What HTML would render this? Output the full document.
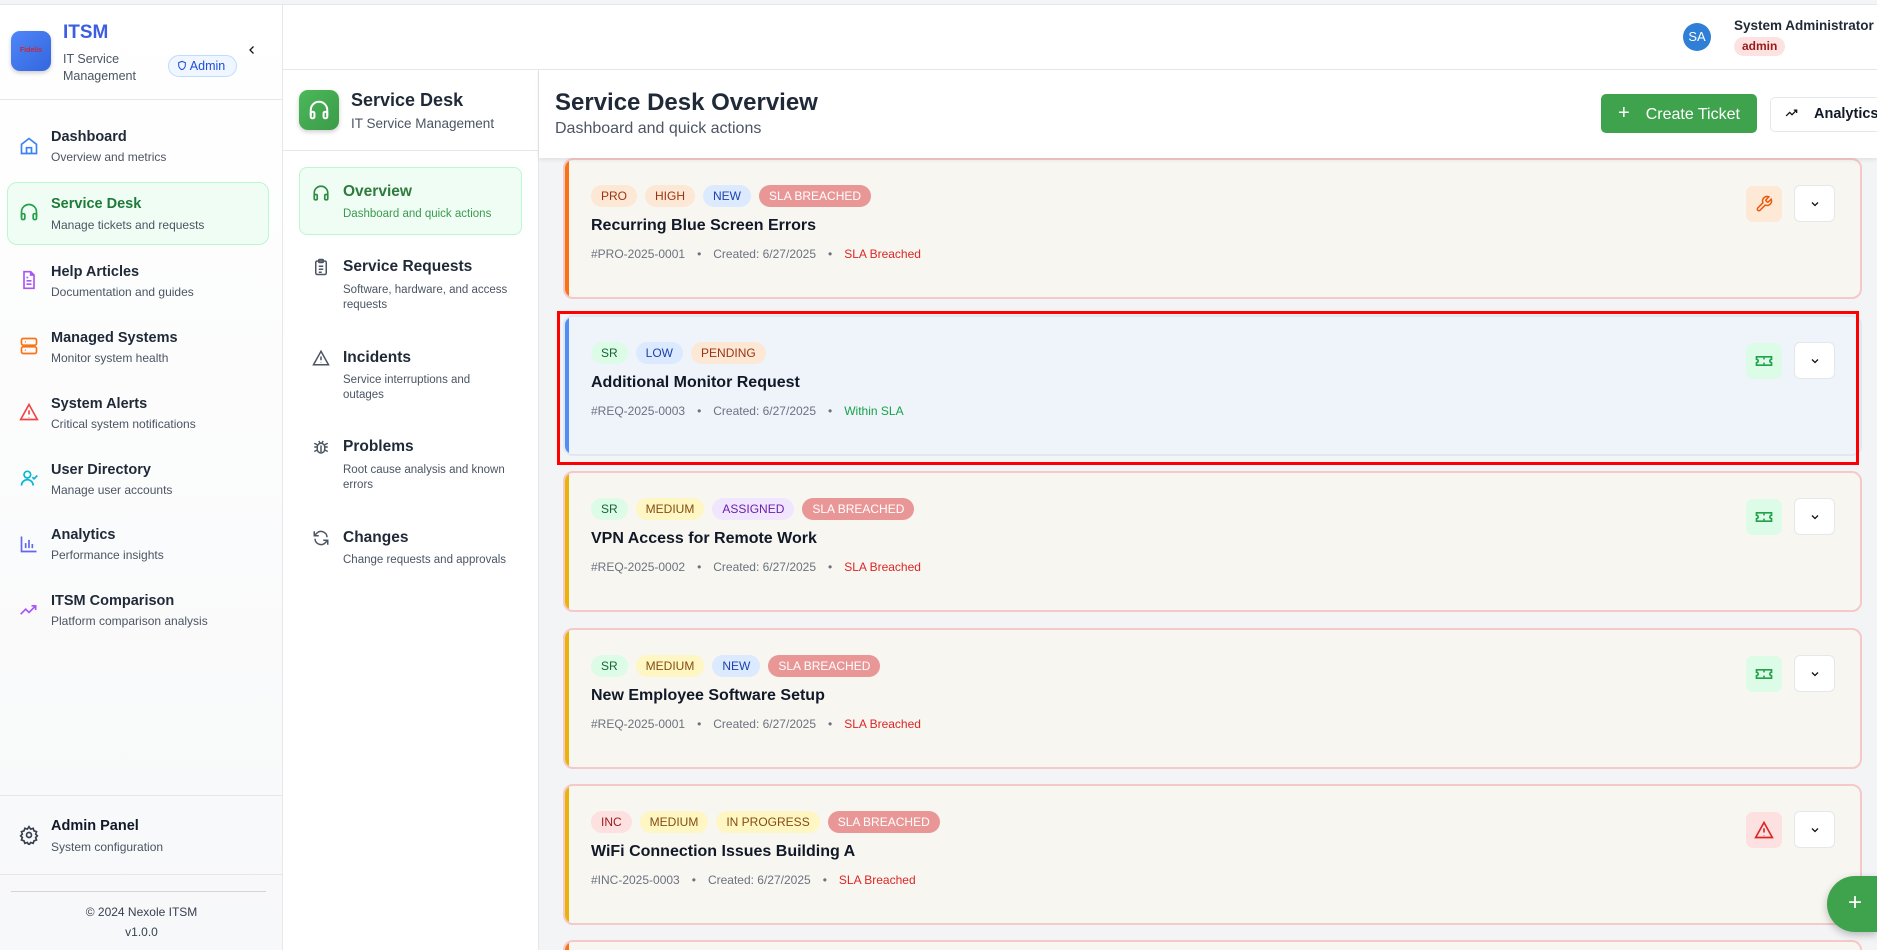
<!DOCTYPE html>
<html><head><meta charset="utf-8"><style>
*{box-sizing:border-box;margin:0;padding:0}
html,body{width:1877px;height:950px;overflow:hidden}
body{font-family:"Liberation Sans",sans-serif;background:#f3f4f6;color:#111827}
#w{position:relative;width:1877px;height:950px;overflow:hidden}
.a{position:absolute}
.side{left:0;top:5px;width:283px;height:945px;background:linear-gradient(#ffffff,#f7f8f9);border-right:1px solid #e5e7eb}
.nav{position:absolute;left:0;width:283px}
.nav .t{position:absolute;left:51px;font-size:14.5px;font-weight:bold;color:#1f2937;white-space:nowrap}
.nav .s{position:absolute;left:51px;font-size:12px;color:#4b5563;white-space:nowrap}
.nav svg{position:absolute;left:19px}
.p2{left:283px;top:70px;width:256px;height:880px;background:#fff;border-right:1px solid #e5e7eb}
.sub .t{position:absolute;left:343px;font-size:15.5px;font-weight:bold;color:#1f2937}
.sub .s{position:absolute;left:343px;font-size:11.5px;color:#4b5563;line-height:15px;white-space:nowrap}
.card{position:absolute;left:563px;width:1299px;height:141px;border:2px solid #f6c8c8;border-radius:10px;background:#f7f6f0;overflow:hidden}
.card:before{content:"";position:absolute;left:0;top:0;bottom:0;width:4px;background:var(--c)}
.badges{position:absolute;left:26px;top:25px;display:flex;gap:8px}
.b{height:22px;line-height:22px;padding:0 10px;border-radius:11px;font-size:12px;font-weight:500}
.ti{position:absolute;left:26px;top:57px;font-size:16px;font-weight:bold;color:#111827}
.me{position:absolute;left:26px;top:87px;font-size:12px;color:#6b7280;white-space:nowrap}
.me i{font-style:normal;margin:0 12px}
.ib{position:absolute;left:1181px;top:26px;width:36px;height:36px;border-radius:7px;display:flex;align-items:center;justify-content:center}
.cb{position:absolute;left:1229px;top:25px;width:41px;height:37px;border-radius:6px;background:#fff;border:1px solid #e5e7eb;display:flex;align-items:center;justify-content:center}
.pro{background:#fde8d5;color:#9a3412}.new{background:#dbeafe;color:#1e40af}.sla{background:#e99696;color:#fff}
.sr{background:#dcfce7;color:#166534}.med{background:#fef6c3;color:#854d0e}.asg{background:#f1e6ff;color:#6b21a8}.inc{background:#fde0e0;color:#991b1b}
</style></head><body><div id="w">
<div class="a" style="left:0;top:4px;width:1877px;height:1px;background:#e5e7eb"></div>
<div class="a" style="left:283px;top:5px;width:1594px;height:65px;background:#fff;border-bottom:1px solid #e5e7eb"></div>
<div class="a" style="left:1683px;top:23px;width:28px;height:28px;border-radius:50%;background:#2f7fd6;color:#fff;font-size:13px;text-align:center;line-height:28px">SA</div>
<div class="a" style="left:1734px;top:18px;font-size:13.5px;font-weight:bold;color:#1f2937">System Administrator</div>
<div class="a" style="left:1734px;top:37px;height:19px;line-height:19px;padding:0 8px;border-radius:10px;background:#fde2e2;color:#991b1b;font-size:12px;font-weight:bold">admin</div>

<div class="a side"></div>
<div class="a" style="left:0;top:99px;width:283px;height:1px;background:#e5e7eb"></div>
<div class="a" style="left:11px;top:31px;width:40px;height:40px;border-radius:9px;background:linear-gradient(135deg,#4f86f7,#3366e0);box-shadow:0 2px 4px rgba(0,0,0,.2);font-size:7px;color:#c02a3a;line-height:40px;text-align:center;font-weight:bold">Fidelis</div>
<div class="a" style="left:63px;top:22px;font-size:19px;font-weight:bold;color:#3d5ee0">ITSM</div>
<div class="a" style="left:63px;top:51px;font-size:12.5px;color:#4b5563;line-height:17px">IT Service<br>Management</div>
<div class="a" style="left:168px;top:55px;width:69px;height:22px;border:1px solid #bfdbfe;background:#eff6ff;border-radius:11px;font-size:12.5px;color:#1d4ed8;line-height:20px;padding-left:8px"><svg width="10" height="11" viewBox="0 0 24 24" fill="none" stroke="#1d4ed8" stroke-width="2.5" style="vertical-align:-1px"><path d="M12 2l8 3v6c0 5-3.5 9-8 11-4.5-2-8-6-8-11V5z"/></svg> Admin</div>
<svg class="a" style="left:246px;top:44px" width="12" height="12" viewBox="0 0 24 24" fill="none" stroke="#111" stroke-width="2.5"><path d="M15 5l-7 7 7 7"/></svg>

<div class="a" style="left:7px;top:182px;width:262px;height:63px;background:#f0fdf4;border:1px solid #bbf7d0;border-radius:10px"></div>
<div class="nav" style="top:0">
 <svg style="top:136px" width="20" height="20" viewBox="0 0 24 24" fill="none" stroke="#3b82f6" stroke-width="2"><path d="M3 10l9-7 9 7v11H3z"/><path d="M9 21v-7h6v7"/></svg>
 <div class="t" style="top:129px">Dashboard</div><div class="s" style="top:150px">Overview and metrics</div>
 <svg style="top:202px" width="20" height="20" viewBox="0 0 24 24" fill="none" stroke="#22a04a" stroke-width="2"><path d="M3 18v-6a9 9 0 0118 0v6"/><rect x="3" y="14" width="4" height="7" rx="1.5"/><rect x="17" y="14" width="4" height="7" rx="1.5"/></svg>
 <div class="t" style="top:196px;color:#1f7a3a">Service Desk</div><div class="s" style="top:218px">Manage tickets and requests</div>
 <svg style="top:270px" width="20" height="20" viewBox="0 0 24 24" fill="none" stroke="#a855f7" stroke-width="2"><path d="M14 2H6v20h12V6z"/><path d="M14 2v4h4M9 13h6M9 17h6M9 9h2"/></svg>
 <div class="t" style="top:264px">Help Articles</div><div class="s" style="top:285px">Documentation and guides</div>
 <svg style="top:336px" width="20" height="20" viewBox="0 0 24 24" fill="none" stroke="#f97316" stroke-width="2"><rect x="3" y="3" width="18" height="8" rx="2"/><rect x="3" y="13" width="18" height="8" rx="2"/><path d="M7 7h1M7 17h1"/></svg>
 <div class="t" style="top:330px">Managed Systems</div><div class="s" style="top:351px">Monitor system health</div>
 <svg style="top:402px" width="20" height="20" viewBox="0 0 24 24" fill="none" stroke="#ef4444" stroke-width="2"><path d="M12 3l10 18H2z"/><path d="M12 10v5M12 18v.5"/></svg>
 <div class="t" style="top:396px">System Alerts</div><div class="s" style="top:417px">Critical system notifications</div>
 <svg style="top:468px" width="20" height="20" viewBox="0 0 24 24" fill="none" stroke="#06b6d4" stroke-width="2"><circle cx="10" cy="8" r="4"/><path d="M3 21a7 7 0 0114 0M16 11l2 2 4-4"/></svg>
 <div class="t" style="top:462px">User Directory</div><div class="s" style="top:483px">Manage user accounts</div>
 <svg style="top:534px" width="20" height="20" viewBox="0 0 24 24" fill="none" stroke="#6366f1" stroke-width="2"><path d="M3 3v18h18M8 17V11M12 17V7M16 17v-5"/></svg>
 <div class="t" style="top:527px">Analytics</div><div class="s" style="top:548px">Performance insights</div>
 <svg style="top:600px" width="20" height="20" viewBox="0 0 24 24" fill="none" stroke="#a855f7" stroke-width="2"><path d="M2 17l6-6 4 4 8-8M15 7h5v5"/></svg>
 <div class="t" style="top:593px">ITSM Comparison</div><div class="s" style="top:614px">Platform comparison analysis</div>
</div>
<div class="a" style="left:0;top:795px;width:283px;height:1px;background:#e5e7eb"></div>
<div class="a" style="left:0;top:874px;width:283px;height:1px;background:#e5e7eb"></div>
<svg class="a" style="left:19px;top:825px" width="20" height="20" viewBox="0 0 24 24" fill="none" stroke="#374151" stroke-width="2"><circle cx="12" cy="12" r="3"/><path d="M12 2l2 3 3-1 1 3 3 1-1 3 2 2-2 2 1 3-3 1-1 3-3-1-2 3-2-3-3 1-1-3-3-1 1-3-2-2 2-2-1-3 3-1 1-3 3 1z"/></svg>
<div class="a" style="left:51px;top:818px;font-size:14.5px;font-weight:bold;color:#111827">Admin Panel</div>
<div class="a" style="left:51px;top:840px;font-size:12px;color:#4b5563">System configuration</div>
<div class="a" style="left:11px;top:891px;width:255px;height:1px;background:#d1d5db"></div>
<div class="a" style="left:0;top:905px;width:283px;text-align:center;font-size:12px;color:#374151">© 2024 Nexole ITSM</div>
<div class="a" style="left:0;top:925px;width:283px;text-align:center;font-size:12px;color:#374151">v1.0.0</div>

<div class="a p2"></div>
<div class="a" style="left:299px;top:90px;width:40px;height:40px;border-radius:9px;background:linear-gradient(135deg,#4cb85a,#3a9b48);box-shadow:0 2px 5px rgba(0,0,0,.2);display:flex;align-items:center;justify-content:center"><svg width="22" height="22" viewBox="0 0 24 24" fill="none" stroke="#fff" stroke-width="2.2"><path d="M3 18v-6a9 9 0 0118 0v6"/><rect x="3" y="14" width="4" height="7" rx="1.5"/><rect x="17" y="14" width="4" height="7" rx="1.5"/></svg></div>
<div class="a" style="left:351px;top:90px;font-size:18px;font-weight:bold;color:#1f2937">Service Desk</div>
<div class="a" style="left:351px;top:116px;font-size:13.5px;color:#4b5563">IT Service Management</div>
<div class="a" style="left:283px;top:150px;width:256px;height:1px;background:#e5e7eb"></div>
<div class="a" style="left:299px;top:167px;width:223px;height:68px;background:#f0fdf4;border:1px solid #bbf7d0;border-radius:8px"></div>
<div class="sub">
 <svg class="a" style="left:312px;top:184px" width="18" height="18" viewBox="0 0 24 24" fill="none" stroke="#2f8a43" stroke-width="2.2"><path d="M3 18v-6a9 9 0 0118 0v6"/><rect x="3" y="14" width="4" height="7" rx="1.5"/><rect x="17" y="14" width="4" height="7" rx="1.5"/></svg>
 <div class="t" style="top:183px;color:#2f7a3d">Overview</div><div class="s" style="top:207px;color:#3a9a50">Dashboard and quick actions</div>
 <svg class="a" style="left:312px;top:258px" width="18" height="18" viewBox="0 0 24 24" fill="none" stroke="#4b5563" stroke-width="2"><rect x="5" y="4" width="14" height="18" rx="2"/><rect x="9" y="2" width="6" height="4" rx="1"/><path d="M9 11h6M9 15h6M9 19h4"/></svg>
 <div class="t" style="top:258px">Service Requests</div><div class="s" style="top:283px">Software, hardware, and access<br>requests</div>
 <svg class="a" style="left:312px;top:349px" width="18" height="18" viewBox="0 0 24 24" fill="none" stroke="#4b5563" stroke-width="2"><path d="M12 3l10 18H2z"/><path d="M12 10v5M12 18v.5"/></svg>
 <div class="t" style="top:349px">Incidents</div><div class="s" style="top:373px">Service interruptions and<br>outages</div>
 <svg class="a" style="left:312px;top:438px" width="18" height="18" viewBox="0 0 24 24" fill="none" stroke="#4b5563" stroke-width="2"><rect x="7" y="7" width="10" height="13" rx="5"/><path d="M9 4l2 3M15 4l-2 3M3 12h4M17 12h4M3 18l4-2M21 18l-4-2M3 7l4 2M21 7l-4 2M12 10v9"/></svg>
 <div class="t" style="top:438px">Problems</div><div class="s" style="top:463px">Root cause analysis and known<br>errors</div>
 <svg class="a" style="left:312px;top:529px" width="18" height="18" viewBox="0 0 24 24" fill="none" stroke="#4b5563" stroke-width="2"><path d="M20 11a8 8 0 00-14-5L3 9M3 3v6h6M4 13a8 8 0 0014 5l3-3M21 21v-6h-6"/></svg>
 <div class="t" style="top:529px">Changes</div><div class="s" style="top:553px">Change requests and approvals</div>
</div>

<div class="card" style="top:158px;--c:#f97316"><div class="badges"><span class="b pro">PRO</span><span class="b pro">HIGH</span><span class="b new">NEW</span><span class="b sla">SLA BREACHED</span></div><div class="ti">Recurring Blue Screen Errors</div><div class="me">#PRO-2025-0001<i>•</i>Created: 6/27/2025<i>•</i><span style="color:#dc2626">SLA Breached</span></div>
<div class="ib" style="background:#fde9d5"><svg width="18" height="18" viewBox="0 0 24 24" fill="none" stroke="#ea580c" stroke-width="2"><path d="M14.7 6.3a1 1 0 000 1.4l1.6 1.6a1 1 0 001.4 0l3.8-3.8a6 6 0 01-7.9 7.9l-6.9 6.9a2.1 2.1 0 01-3-3l6.9-6.9a6 6 0 017.9-7.9z"/></svg></div><div class="cb"><svg width="12" height="12" viewBox="0 0 24 24" fill="none" stroke="#111" stroke-width="2.5"><path d="M6 9l6 6 6-6"/></svg></div></div>

<div class="card" style="top:315px;--c:#4f8ef7;background:#eff3fa;border-color:#e3e7ef"><div class="badges"><span class="b sr">SR</span><span class="b new">LOW</span><span class="b pro">PENDING</span></div><div class="ti">Additional Monitor Request</div><div class="me">#REQ-2025-0003<i>•</i>Created: 6/27/2025<i>•</i><span style="color:#16a34a">Within SLA</span></div>
<div class="ib" style="background:#dcfce7"><svg width="20" height="20" viewBox="0 0 24 24" fill="none" stroke="#22a04a" stroke-width="2"><path d="M3 7h18v3a2 2 0 000 4v3H3v-3a2 2 0 000-4z"/><path d="M12 8v2M12 14v2"/></svg></div><div class="cb"><svg width="12" height="12" viewBox="0 0 24 24" fill="none" stroke="#111" stroke-width="2.5"><path d="M6 9l6 6 6-6"/></svg></div></div>

<div class="card" style="top:471px;--c:#eab308"><div class="badges"><span class="b sr">SR</span><span class="b med">MEDIUM</span><span class="b asg">ASSIGNED</span><span class="b sla">SLA BREACHED</span></div><div class="ti">VPN Access for Remote Work</div><div class="me">#REQ-2025-0002<i>•</i>Created: 6/27/2025<i>•</i><span style="color:#dc2626">SLA Breached</span></div>
<div class="ib" style="background:#dcfce7"><svg width="20" height="20" viewBox="0 0 24 24" fill="none" stroke="#22a04a" stroke-width="2"><path d="M3 7h18v3a2 2 0 000 4v3H3v-3a2 2 0 000-4z"/><path d="M12 8v2M12 14v2"/></svg></div><div class="cb"><svg width="12" height="12" viewBox="0 0 24 24" fill="none" stroke="#111" stroke-width="2.5"><path d="M6 9l6 6 6-6"/></svg></div></div>

<div class="card" style="top:628px;--c:#eab308"><div class="badges"><span class="b sr">SR</span><span class="b med">MEDIUM</span><span class="b new">NEW</span><span class="b sla">SLA BREACHED</span></div><div class="ti">New Employee Software Setup</div><div class="me">#REQ-2025-0001<i>•</i>Created: 6/27/2025<i>•</i><span style="color:#dc2626">SLA Breached</span></div>
<div class="ib" style="background:#dcfce7"><svg width="20" height="20" viewBox="0 0 24 24" fill="none" stroke="#22a04a" stroke-width="2"><path d="M3 7h18v3a2 2 0 000 4v3H3v-3a2 2 0 000-4z"/><path d="M12 8v2M12 14v2"/></svg></div><div class="cb"><svg width="12" height="12" viewBox="0 0 24 24" fill="none" stroke="#111" stroke-width="2.5"><path d="M6 9l6 6 6-6"/></svg></div></div>

<div class="card" style="top:784px;--c:#eab308"><div class="badges"><span class="b inc">INC</span><span class="b med">MEDIUM</span><span class="b med">IN PROGRESS</span><span class="b sla">SLA BREACHED</span></div><div class="ti">WiFi Connection Issues Building A</div><div class="me">#INC-2025-0003<i>•</i>Created: 6/27/2025<i>•</i><span style="color:#dc2626">SLA Breached</span></div>
<div class="ib" style="background:#fde0e0"><svg width="20" height="20" viewBox="0 0 24 24" fill="none" stroke="#dc2626" stroke-width="2"><path d="M12 3l10 18H2z"/><path d="M12 10v5M12 18v.5"/></svg></div><div class="cb"><svg width="12" height="12" viewBox="0 0 24 24" fill="none" stroke="#111" stroke-width="2.5"><path d="M6 9l6 6 6-6"/></svg></div></div>

<div class="card" style="top:940px;height:10px;border-bottom:none;border-radius:10px 10px 0 0;--c:#f97316"></div>

<div class="a" style="left:557px;top:311px;width:1302px;height:154px;border:3px solid #f00"></div>

<div class="a" style="left:539px;top:70px;width:1338px;height:88px;background:#fff;box-shadow:0 2px 4px rgba(0,0,0,.08)"></div>
<div class="a" style="left:555px;top:89px;font-size:24px;font-weight:bold;color:#1f2937">Service Desk Overview</div>
<div class="a" style="left:555px;top:120px;font-size:16px;color:#4b5563">Dashboard and quick actions</div>
<div class="a" style="left:1601px;top:94px;width:156px;height:39px;background:#3fa34d;border-radius:5px;color:#fff;font-size:16px;line-height:39px;padding-left:17px"><span style="font-size:20px;margin-right:16px">+</span>Create Ticket</div>
<div class="a" style="left:1770px;top:97px;width:107px;height:35px;background:#fff;border:1px solid #e5e7eb;border-right:none;border-radius:5px 0 0 5px;font-size:14.5px;font-weight:bold;line-height:33px;padding-left:13px;white-space:nowrap;overflow:hidden"><svg width="16" height="14" viewBox="0 0 24 24" fill="none" stroke="#111" stroke-width="2.2" style="vertical-align:-2px;margin-right:14px"><path d="M2 17l6-6 4 4 8-8M15 7h5v5"/></svg>Analytics</div>

<div class="a" style="left:1827px;top:876px;width:50px;height:56px;border-radius:28px 0 0 28px;background:#3fa34d;box-shadow:0 3px 8px rgba(0,0,0,.25);color:#fff;font-size:24px;line-height:54px;padding-left:21px">+</div>
</div></body></html>
